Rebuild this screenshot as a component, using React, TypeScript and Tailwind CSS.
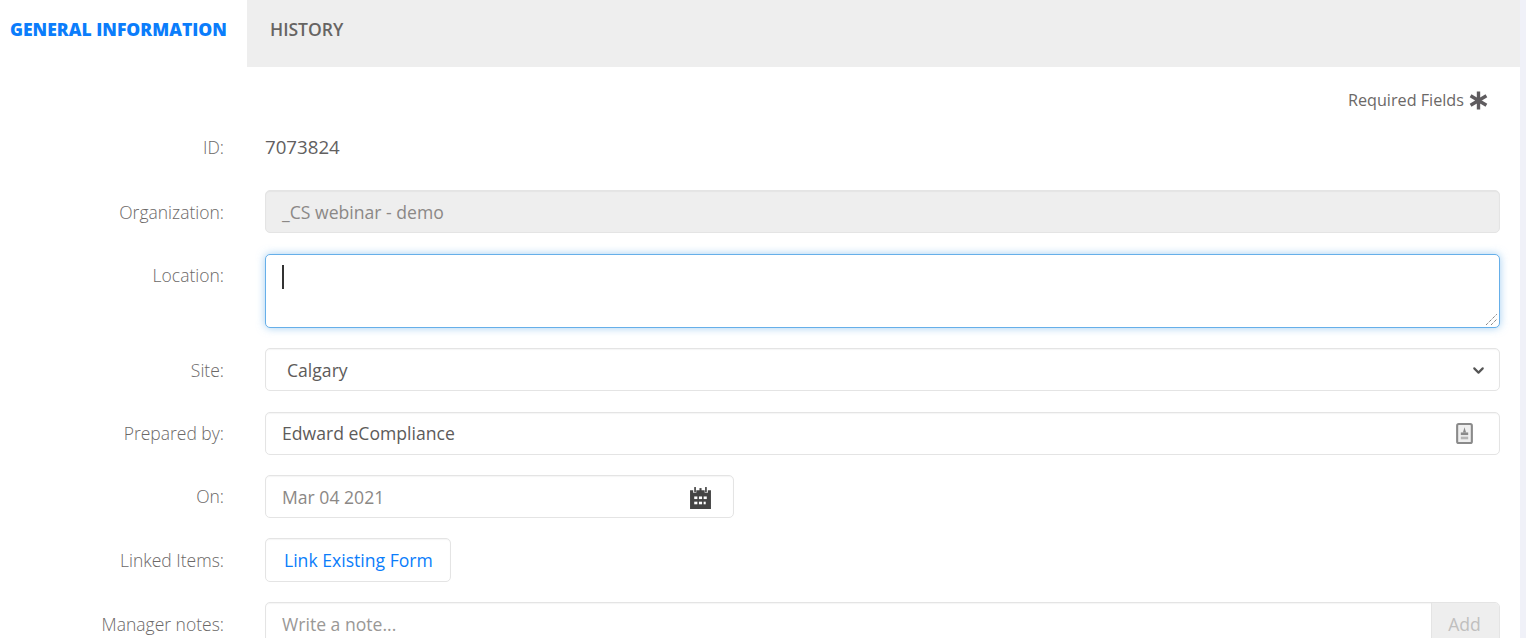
import { ChevronDown } from 'lucide-react';

const labelClass = 'w-[224px] shrink-0 text-right text-[17.5px] font-light text-[#6b6867]';
const fieldClass = 'flex items-center rounded-[5px] border border-[#e4e4e4] shadow-[inset_0_1px_1px_rgba(0,0,0,0.04)] text-[17.6px]';

function Row({ label, className, labelClassName, children }: { label: string; className?: string; labelClassName?: string; children: React.ReactNode }) {
  return (
    <div className={`flex ${className ?? ''}`}>
      <div className={`${labelClass} ${labelClassName ?? 'self-center'}`}>{label}</div>
      <div className="ml-[41px] min-w-0 flex-1">{children}</div>
    </div>
  );
}

function BadgeIcon() {
  return (
    <svg width="17" height="21" viewBox="0 0 16 20">
      <rect x="1" y="1" width="14" height="18" rx="1.5" fill="#efefef" stroke="#8a8a8a" strokeWidth="2" />
      <path d="M8 4 L9.5 9 H6.5 Z" fill="#8a8a8a" />
      <rect x="4.5" y="9" width="7" height="2.5" fill="#8a8a8a" />
      <rect x="4.5" y="13" width="7" height="2.5" fill="#b5b5b5" />
    </svg>
  );
}

function CalendarIcon() {
  return (
    <svg width="23" height="23" viewBox="0 0 22 22" fill="#444444">
      <path d="M1 4h3v2.5h3V4h8v2.5h3V4h3v18H1z" />
      <rect x="5" y="1" width="1.6" height="5" />
      <rect x="15.4" y="1" width="1.6" height="5" />
      <rect x="10" y="2" width="2" height="3" />
      <g fill="#ffffff">
        <rect x="5" y="10" width="3" height="2.5" />
        <rect x="9.5" y="10" width="3" height="2.5" />
        <rect x="14" y="10" width="3" height="2.5" />
        <rect x="5" y="15" width="3" height="2.5" />
        <rect x="9.5" y="15" width="3" height="2.5" />
        <rect x="14" y="15" width="2" height="2.5" />
      </g>
    </svg>
  );
}

export default function App() {
  return (
    <div className="h-[638px] overflow-hidden bg-[#f0f1f8] pr-[6px] font-['Open_Sans',sans-serif]">
      <div className="h-full bg-white">
        <div className="flex h-[67px] bg-[#eeeeee] text-[17.5px] font-bold">
          <div className="flex w-[247px] items-center bg-white pb-[8px] pl-[10px] text-[17.55px] font-extrabold text-[#0b7dfb]">
            GENERAL INFORMATION
          </div>
          <div className="flex items-center pb-[8px] pl-[23px] font-semibold text-[#666462]">HISTORY</div>
        </div>

        <div className="mt-[19px] flex h-[28px] items-center justify-end pr-[32px] text-[16.2px] text-[#6b6867]">
          Required Fields
          <svg className="ml-[5px]" width="19" height="19" viewBox="0 0 18 18" stroke="#5f5c5f" strokeWidth="3.2">
            <path d="M9 0.5v17M1.5 4.5l15 9M16.5 4.5l-15 9" />
          </svg>
        </div>

        <div className="pr-[20px]">
          <Row label="ID:" className="mt-[18px] h-[30px] items-center">
            <div className="text-[18.7px] text-[#62605f]">7073824</div>
          </Row>

          <Row label="Organization:" className="mt-[28px]" labelClassName="self-center pt-[1px]">
            <div className={`${fieldClass} h-[43px] bg-[#eeeeee] pl-[16px] pt-[2px] text-[#8b8886]`}>_CS webinar - demo</div>
          </Row>

          <Row label="Location:" className="mt-[21px]" labelClassName="pt-[8px]">
            <div className="relative h-[74px] rounded-[5px] border border-[#66afe9] bg-white shadow-[0_0_8px_rgba(102,175,233,0.6)]">
              <div className="absolute left-[16px] top-[10px] h-[24px] w-[1.5px] bg-[#333333]" />
              <svg className="absolute bottom-px right-px" width="13" height="13" viewBox="0 0 13 13" stroke="#555555" strokeWidth="1" strokeDasharray="1 1">
                <path d="M1 12 12 1M6 12 12 6" />
              </svg>
            </div>
          </Row>

          <Row label="Site:" className="mt-[20px]" labelClassName="self-center pt-[2px]">
            <div className={`${fieldClass} h-[43px] justify-between pl-[21px] pr-[12px] pt-[2px] text-[#5d5b5a]`}>
              Calgary
              <ChevronDown size={17} strokeWidth={3} color="#555555" />
            </div>
          </Row>

          <Row label="Prepared by:" className="mt-[21px]">
            <div className={`${fieldClass} h-[43px] justify-between pl-[16px] pr-[26px] text-[#5d5b5a]`}>
              Edward eCompliance
              <BadgeIcon />
            </div>
          </Row>

          <Row label="On:" className="mt-[20px]">
            <div className={`${fieldClass} h-[43px] w-[469px] justify-between pl-[16px] pr-[21px] pt-[1px] text-[#8b8886]`}>
              Mar 04 2021
              <CalendarIcon />
            </div>
          </Row>

          <Row label="Linked Items:" className="mt-[20px]">
            <div className={`${fieldClass} h-[44px] w-fit pl-[18px] pr-[17px] text-[#0b7dfb]`}>Link Existing Form</div>
          </Row>

          <Row label="Manager notes:" className="mt-[20px]">
            <div className={`${fieldClass} h-[44px] overflow-hidden text-[#9a9896]`}>
              <div className="flex-1 pl-[16px]">Write a note...</div>
              <div className="flex h-full w-[68px] items-center justify-center border-l border-[#e4e4e4] bg-[#eeeeee] pr-[2px] text-[#c0bfbe]">
                Add
              </div>
            </div>
          </Row>
        </div>
      </div>
    </div>
  );
}
